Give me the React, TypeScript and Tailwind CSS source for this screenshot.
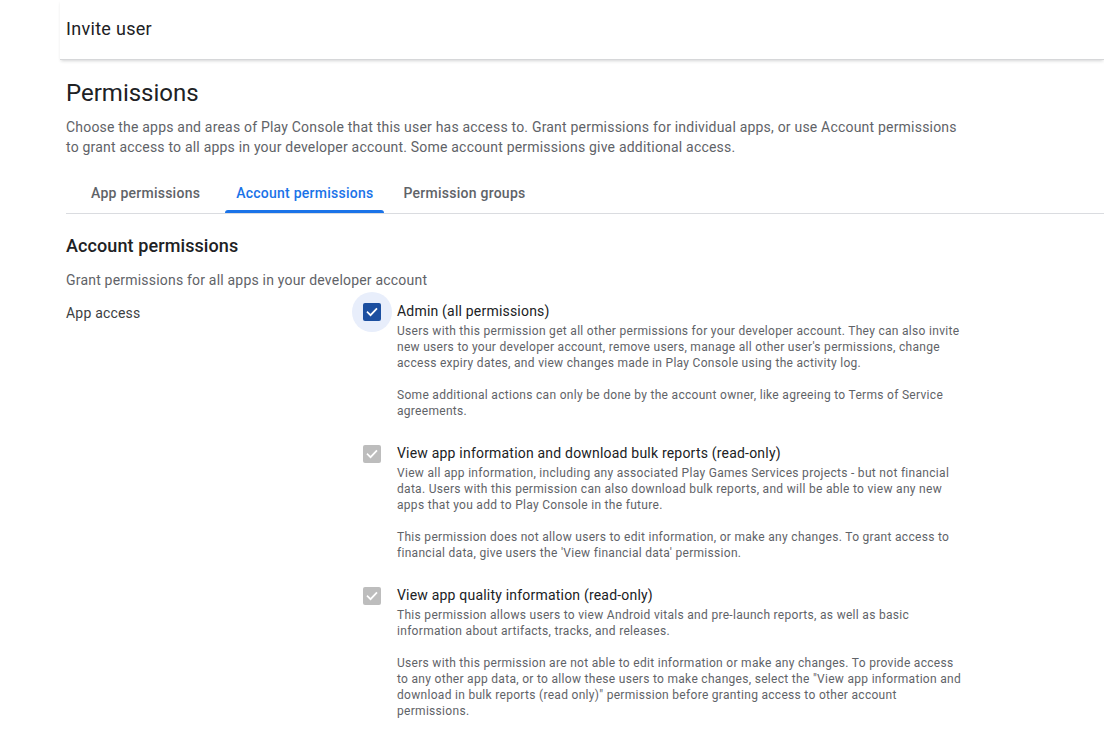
import React from "react";

type Perm = {
  title: string;
  paragraphs: string[][];
  state: "checked" | "locked";
};

// Each paragraph is kept as its rendered lines so the wrapping stays stable.
const perms: Perm[] = [
  {
    title: "Admin (all permissions)",
    state: "checked",
    paragraphs: [
      [
        "Users with this permission get all other permissions for your developer account. They can also invite",
        "new users to your developer account, remove users, manage all other user's permissions, change",
        "access expiry dates, and view changes made in Play Console using the activity log.",
      ],
      [
        "Some additional actions can only be done by the account owner, like agreeing to Terms of Service",
        "agreements.",
      ],
    ],
  },
  {
    title: "View app information and download bulk reports (read-only)",
    state: "locked",
    paragraphs: [
      [
        "View all app information, including any associated Play Games Services projects - but not financial",
        "data. Users with this permission can also download bulk reports, and will be able to view any new",
        "apps that you add to Play Console in the future.",
      ],
      [
        "This permission does not allow users to edit information, or make any changes. To grant access to",
        "financial data, give users the 'View financial data' permission.",
      ],
    ],
  },
  {
    title: "View app quality information (read-only)",
    state: "locked",
    paragraphs: [
      [
        "This permission allows users to view Android vitals and pre-launch reports, as well as basic",
        "information about artifacts, tracks, and releases.",
      ],
      [
        "Users with this permission are not able to edit information or make any changes. To provide access",
        "to any other app data, or to allow these users to make changes, select the \"View app information and",
        "download in bulk reports (read only)\" permission before granting access to other account",
        "permissions.",
      ],
    ],
  },
];

function CheckMark() {
  return (
    <svg width="14" height="14" viewBox="0 0 24 24" fill="none">
      <path
        d="M4.5 12.5l5 5 10-10.5"
        stroke="white"
        strokeWidth="3"
        strokeLinecap="square"
      />
    </svg>
  );
}

function Box({ state }: { state: Perm["state"] }) {
  if (state === "checked") {
    return (
      <div className="w-10 h-10 rounded-full bg-[#e8eefb] flex items-center justify-center shrink-0">
        <div className="w-[18px] h-[18px] rounded-[2px] bg-[#1c4fa0] flex items-center justify-center">
          <CheckMark />
        </div>
      </div>
    );
  }
  return (
    <div className="w-10 h-10 flex items-center justify-center shrink-0">
      <div className="w-[18px] h-[18px] rounded-[2px] bg-[#bdbdbd] flex items-center justify-center">
        <CheckMark />
      </div>
    </div>
  );
}

function PermItem({ p }: { p: Perm }) {
  return (
    <div className="flex items-start">
      <div className="-mt-[9px]">
        <Box state={p.state} />
      </div>
      <div className="ml-[5px] w-[600px]">
        <div className="text-[14px] leading-[20px] text-[#202124] tracking-[0.2px]">{p.title}</div>
        {p.paragraphs.map((lines, i) => (
          <p
            key={i}
            className={`text-[12px] leading-[16px] text-[#5f6368] tracking-[0.3px] whitespace-nowrap ${i > 0 ? "mt-[16px]" : "mt-[2px]"}`}
          >
            {lines.map((l, j) => (
              <span key={j} className="block">
                {l}
              </span>
            ))}
          </p>
        ))}
      </div>
    </div>
  );
}

export default function App() {
  return (
    <div className="min-h-screen bg-white font-['Roboto','Liberation_Sans',sans-serif] overflow-hidden">
      <header className="ml-[60px] h-[60px] pl-[6px] flex items-center border-b border-[#d6d7d9] shadow-[0_2px_3px_-1px_rgba(60,64,67,0.22)]">
        <h1 className="text-[18px] text-[#202124] tracking-[0.3px] -mt-[3px]">Invite user</h1>
      </header>

      <main className="ml-[66px]">
        <h2 className="mt-[17px] text-[24px] leading-[32px] text-[#202124]">Permissions</h2>
        <p className="mt-[8px] w-[900px] text-[14px] leading-[20px] text-[#5f6368] tracking-[0.2px]">
          Choose the apps and areas of Play Console that this user has access to. Grant permissions for individual apps, or use Account permissions
          <br />
          to grant access to all apps in your developer account. Some account permissions give additional access.
        </p>

        <nav className="mt-[17px] flex border-b border-[#dadce0] text-[14px] font-medium tracking-[0.25px]">
          <button className="ml-[14px] px-[11px] h-[39px] text-[#5f6368]">App permissions</button>
          <button className="ml-[14px] px-[11px] h-[39px] text-[#1a73e8] relative">
            Account permissions
            <span className="absolute left-0 right-0 bottom-0 h-[3px] rounded-t-[3px] bg-[#1a73e8]" />
          </button>
          <button className="ml-[8px] px-[11px] h-[39px] text-[#5f6368]">Permission groups</button>
        </nav>

        <h3 className="mt-[20px] text-[18px] leading-[24px] font-medium text-[#202124] tracking-[0.1px]">
          Account permissions
        </h3>
        <p className="mt-[12px] text-[14px] leading-[20px] text-[#5f6368] tracking-[0.2px]">
          Grant permissions for all apps in your developer account
        </p>

        <div className="mt-[11px] flex items-start">
          <div className="w-[286px] shrink-0 pt-[2px] text-[14px] leading-[20px] text-[#3c4043] tracking-[0.2px]">
            App access
          </div>
          <div className="flex flex-col gap-[24px]">
            {perms.map((p) => (
              <PermItem key={p.title} p={p} />
            ))}
          </div>
        </div>
      </main>
    </div>
  );
}
